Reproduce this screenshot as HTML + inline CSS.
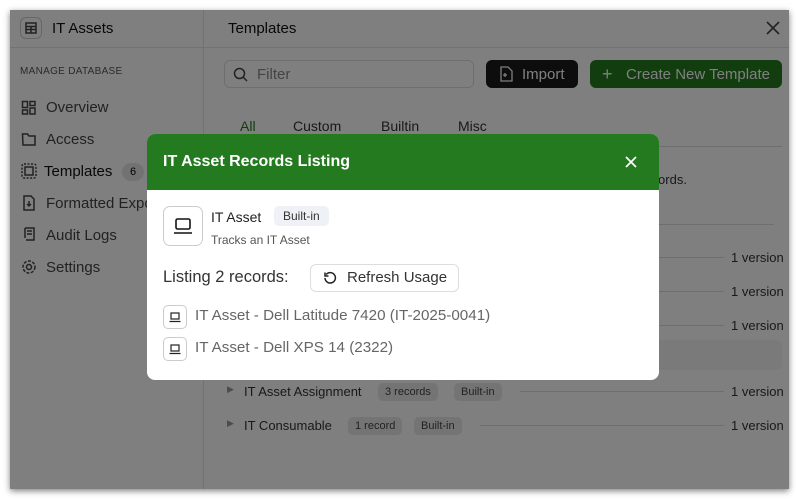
<!DOCTYPE html>
<html><head><style>
*{margin:0;padding:0;box-sizing:border-box}
body{width:796px;height:499px;background:#fff;font-family:"Liberation Sans",sans-serif;position:relative;overflow:hidden}
.a{position:absolute;white-space:nowrap}
#win{position:absolute;left:10px;top:10px;width:779px;height:479px;background:#fff;box-shadow:0 2px 6px rgba(0,0,0,.5);overflow:hidden}
.nav{font-size:15px;color:#444}
.ic{stroke:#444;fill:none;stroke-width:1.5}
.badge{background:#e8e8e8;border-radius:5px;font-size:11px;color:#444;padding:3px 7px}
.ver{font-size:13px;color:#333}
.ln{position:absolute;height:1px;background:#ddd}
#ov{position:absolute;left:0;top:0;width:779px;height:479px;background:rgba(0,0,0,.5)}
</style></head><body>
<div id="win">
 <div class="a" style="left:193px;top:0;width:1px;height:479px;background:#e5e5e5"></div>
 <div class="ln" style="left:0;top:37px;width:779px;background:#e5e5e5"></div>
 <div class="a" style="left:10px;top:7px;width:22px;height:22px;border:1px solid #ccc;border-radius:6px"></div>
 <svg class="a" style="left:14px;top:11px" width="14" height="14"><rect x="2" y="2" width="10" height="10" class="ic" stroke="#222"/><path d="M2 5.5h10M2 8.5h10M7 5.5v6.5" class="ic" stroke="#222"/></svg>
 <div class="a" style="left:42px;top:10px;font-size:15px;color:#111">IT Assets</div>
 <div class="a" style="left:218px;top:10px;font-size:15px;color:#111">Templates</div>
 <svg class="a" style="left:755px;top:10px" width="16" height="16"><path d="M2 2l12 12M14 2L2 14" stroke="#444" stroke-width="1.6"/></svg>
 <div class="a" style="left:10px;top:56px;font-size:10px;color:#555;letter-spacing:.3px">MANAGE DATABASE</div>
 <div class="a nav" style="left:36px;top:89px">Overview</div>
 <div class="a nav" style="left:36px;top:121px">Access</div>
 <div class="a nav" style="left:34px;top:153px;color:#111">Templates</div>
 <div class="a" style="left:112px;top:153px;width:22px;height:18px;border-radius:9px;background:#e5e5e5;font-size:11px;text-align:center;line-height:18px">6</div>
 <div class="a nav" style="left:36px;top:185px">Formatted Exports</div>
 <div class="a nav" style="left:36px;top:217px">Audit Logs</div>
 <div class="a nav" style="left:36px;top:249px">Settings</div>
 <svg class="a" style="left:11px;top:90px" width="16" height="180"><rect x="1.5" y="1.5" width="5" height="6" class="ic"/><rect x="9" y="1.5" width="5" height="4" class="ic"/><rect x="1.5" y="10" width="5" height="4" class="ic"/><rect x="9" y="8" width="5" height="6" class="ic"/>
 <path d="M1.5 34h5l1.5 2h6v9h-12z" class="ic"/>
 <rect x="1" y="64" width="14" height="14" rx="2" class="ic" stroke-dasharray="2 1.5"/><rect x="4" y="67" width="8" height="8" class="ic"/>
 <path d="M3 96h7l3 3v11h-10z M8 101v5 M6 104l2 2 2-2" class="ic"/>
 <path d="M4 128h9v12h-8 M4 128v10 M6 131h5M6 134h5" class="ic"/>
 <circle cx="8" cy="167" r="2.5" class="ic"/><circle cx="8" cy="167" r="6" class="ic" stroke-dasharray="3 1.5"/></svg>
 <div class="a" style="left:214px;top:50px;width:250px;height:28px;border:1px solid #ddd;border-radius:6px"></div>
 <svg class="a" style="left:223px;top:57px" width="15" height="15"><circle cx="6.5" cy="6.5" r="5" class="ic" stroke="#777"/><path d="M10 10l4 4" class="ic" stroke="#777"/></svg>
 <div class="a" style="left:247px;top:56px;font-size:15px;color:#888">Filter</div>
 <div class="a" style="left:476px;top:50px;width:92px;height:28px;border-radius:6px;background:#1a1a1a"></div>
 <svg class="a" style="left:489px;top:56px" width="14" height="16"><path d="M2 1h7l4 4v10h-11z M4 9h4M6 7v4" stroke="#fff" fill="none" stroke-width="1.3"/></svg>
 <div class="a" style="left:512px;top:56px;font-size:15px;color:#fff">Import</div>
 <div class="a" style="left:580px;top:50px;width:192px;height:28px;border-radius:6px;background:#227a1f"></div>
 <div class="a" style="left:592px;top:54px;font-size:18px;color:#fff">+</div>
 <div class="a" style="left:616px;top:56px;font-size:15px;color:#fff">Create New Template</div>
 <div class="a" style="left:230px;top:108px;font-size:14px;color:#227a1f">All</div>
 <div class="a" style="left:283px;top:108px;font-size:14px;color:#333">Custom</div>
 <div class="a" style="left:371px;top:108px;font-size:14px;color:#333">Builtin</div>
 <div class="a" style="left:448px;top:108px;font-size:14px;color:#333">Misc</div>
 <div class="ln" style="left:214px;top:136px;width:558px"></div>
 <div class="a" style="left:630px;top:162px;font-size:13px;color:#333">records.</div>
 <div class="ln" style="left:214px;top:214px;width:550px"></div>
 <div class="ln" style="left:420px;top:247px;width:294px"></div><div class="a ver" style="left:721px;top:240px">1 version</div>
 <div class="ln" style="left:420px;top:281px;width:294px"></div><div class="a ver" style="left:721px;top:274px">1 version</div>
 <div class="ln" style="left:420px;top:315px;width:294px"></div><div class="a ver" style="left:721px;top:308px">1 version</div>
 <div class="a" style="left:214px;top:330px;width:558px;height:30px;background:#f4f4f4;border-radius:6px"></div>
 <div class="a" style="left:217px;top:374px;font-size:9px;color:#999">▶</div>
 <div class="a" style="left:234px;top:374px;font-size:13px;color:#333">IT Asset Assignment</div>
 <div class="a badge" style="left:368px;top:373px">3 records</div>
 <div class="a badge" style="left:444px;top:373px">Built-in</div>
 <div class="ln" style="left:510px;top:381px;width:204px"></div><div class="a ver" style="left:721px;top:374px">1 version</div>
 <div class="a" style="left:217px;top:408px;font-size:9px;color:#999">▶</div>
 <div class="a" style="left:234px;top:408px;font-size:13px;color:#333">IT Consumable</div>
 <div class="a badge" style="left:338px;top:407px">1 record</div>
 <div class="a badge" style="left:404px;top:407px">Built-in</div>
 <div class="ln" style="left:470px;top:415px;width:244px"></div><div class="a ver" style="left:721px;top:408px">1 version</div>
 <div id="ov"></div>
</div>
<div class="a" style="left:147px;top:134px;width:512px;height:246px;background:#fff;border-radius:8px;overflow:hidden">
 <div class="a" style="left:0;top:0;width:512px;height:56px;background:#237a1f"></div>
 <div class="a" style="left:16px;top:19px;font-size:16px;font-weight:bold;color:#fff">IT Asset Records Listing</div>
 <svg class="a" style="left:477px;top:21px" width="14" height="14"><path d="M2 2l10 10M12 2L2 12" stroke="#fff" stroke-width="1.7"/></svg>
 <div class="a" style="left:16px;top:72px;width:40px;height:40px;border:1px solid #ccc;border-radius:7px"></div>
 <svg class="a" style="left:24px;top:80px" width="24" height="24"><rect x="5" y="5" width="14" height="10" rx="1.5" fill="none" stroke="#111" stroke-width="1.6"/><path d="M3 19h18" stroke="#111" stroke-width="1.6"/></svg>
 <div class="a" style="left:64px;top:75px;font-size:14px;color:#222">IT Asset</div>
 <div class="a" style="left:127px;top:72px;background:#eef1f6;border-radius:5px;font-size:12px;color:#333;padding:3px 9px">Built-in</div>
 <div class="a" style="left:64px;top:99px;font-size:12px;color:#555">Tracks an IT Asset</div>
 <div class="a" style="left:16px;top:134px;font-size:16.5px;color:#333">Listing 2 records:</div>
 <div class="a" style="left:163px;top:130px;width:149px;height:28px;border:1px solid #ddd;border-radius:6px"></div>
 <svg class="a" style="left:176px;top:137px" width="14" height="14"><path d="M3.2 3.5A5.2 5.2 0 1 1 2 7" fill="none" stroke="#222" stroke-width="1.5"/><path d="M2 1.5v3.5h3.5" fill="none" stroke="#222" stroke-width="1.5"/></svg>
 <div class="a" style="left:200px;top:135px;font-size:15px;color:#333">Refresh Usage</div>
 <div class="a" style="left:16px;top:171px;width:24px;height:24px;border:1px solid #ccc;border-radius:5px"></div>
 <svg class="a" style="left:21px;top:176px" width="14" height="14"><rect x="3" y="3" width="8" height="6" fill="none" stroke="#222" stroke-width="1.2"/><path d="M1.5 11.5h11" stroke="#222" stroke-width="1.2"/></svg>
 <div class="a" style="left:48px;top:173px;font-size:15.2px;color:#666">IT Asset - Dell Latitude 7420 (IT-2025-0041)</div>
 <div class="a" style="left:16px;top:203px;width:24px;height:24px;border:1px solid #ccc;border-radius:5px"></div>
 <svg class="a" style="left:21px;top:208px" width="14" height="14"><rect x="3" y="3" width="8" height="6" fill="none" stroke="#222" stroke-width="1.2"/><path d="M1.5 11.5h11" stroke="#222" stroke-width="1.2"/></svg>
 <div class="a" style="left:48px;top:205px;font-size:15.2px;color:#666">IT Asset - Dell XPS 14 (2322)</div>
</div>
</body></html>
